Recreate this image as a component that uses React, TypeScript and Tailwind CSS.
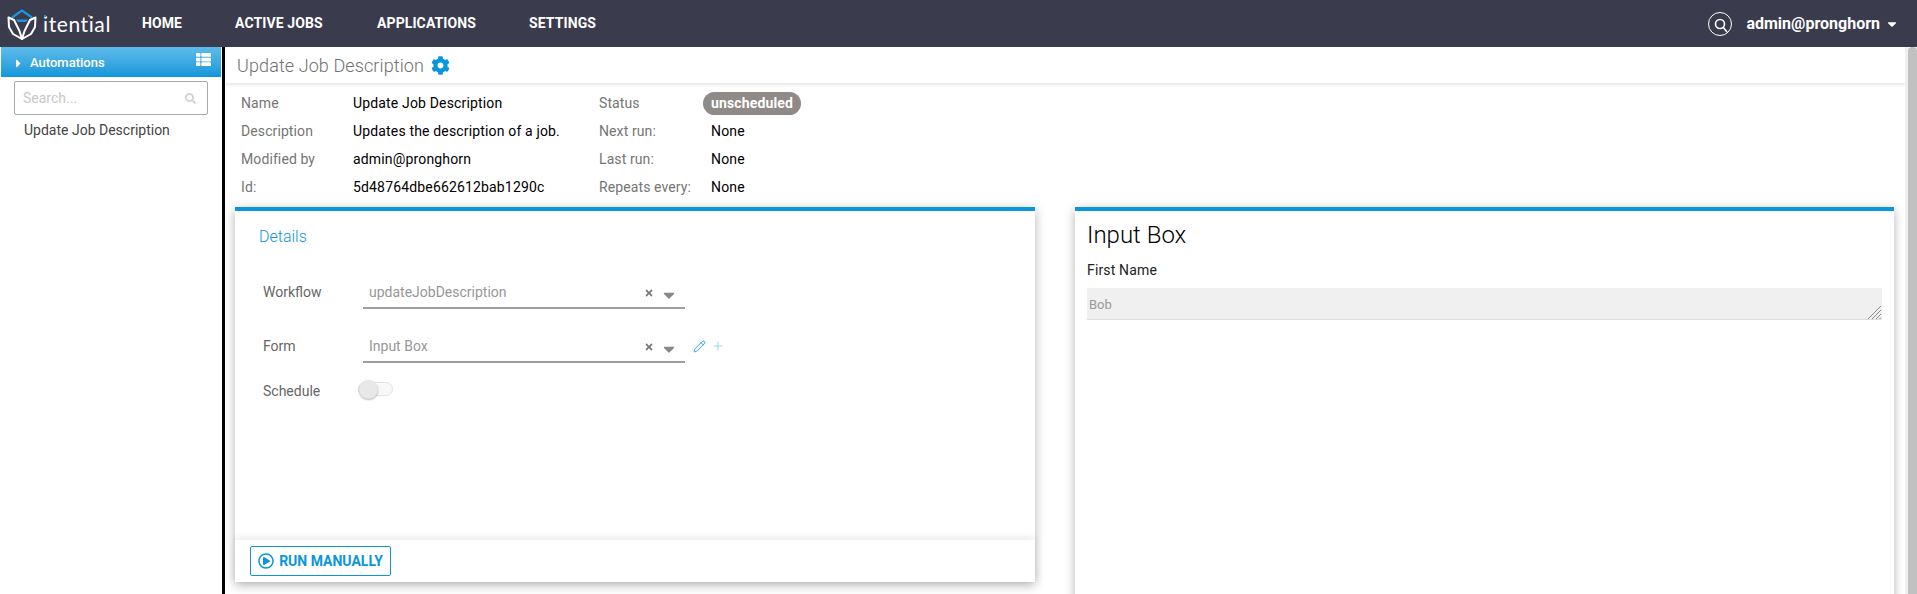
import { FaCaretDown, FaCaretRight, FaCog, FaRegPlayCircle, FaSearch, FaThList, FaTimes } from "react-icons/fa";
import { Pencil, Plus } from "lucide-react";

const navItems = [
  { label: "HOME", cls: "w-[93px]" },
  { label: "ACTIVE JOBS", cls: "w-[142px]" },
  { label: "APPLICATIONS", cls: "w-[152px]" },
  { label: "SETTINGS", cls: "" },
];

const leftInfo = [
  ["Name", "Update Job Description"],
  ["Description", "Updates the description of a job."],
  ["Modified by", "admin@pronghorn"],
  ["Id:", "5d48764dbe662612bab1290c"],
];

const rightInfo = [
  ["Next run:", "None"],
  ["Last run:", "None"],
  ["Repeats every:", "None"],
];

function Logo() {
  return (
    <div className="flex items-center">
      <svg width="30" height="32" viewBox="0 0 30 32" fill="none" className="mt-[3px]">
        <path d="M5 8.5 L15 1.5 L25 8.5" stroke="#1b98dc" strokeWidth="2.2" />
        <path d="M9 10.5 H21 L19 13 H11 Z" fill="#1b98dc" />
        <path d="M1.5 8.5 L7 11 L12.5 22 L15 30 L6 25 L2 18 Z" stroke="#fff" strokeWidth="2" strokeLinejoin="round" />
        <path d="M28.5 8.5 L23 11 L17.5 22 L15 30 L24 25 L28 18 Z" stroke="#fff" strokeWidth="2" strokeLinejoin="round" />
      </svg>
      <span className="relative ml-[6px] font-['Lato',sans-serif] text-[21px] font-normal leading-none tracking-[0.6px] text-white">
        itential
        <span className="absolute left-[1px] top-[2px] h-[2px] w-[2px] bg-[#1b98dc]" />
        <span className="absolute left-[45px] top-[2px] h-[2px] w-[2px] bg-[#e8702a]" />
      </span>
    </div>
  );
}

function NavBar() {
  return (
    <header className="flex h-[47px] items-center bg-[#3a3c4e] pl-[7px] pr-[18px] text-white">
      <div className="w-[135px]">
        <Logo />
      </div>
      <nav className="flex text-[14px] font-bold tracking-[0.1px]">
        {navItems.map((n) => (
          <span key={n.label} className={n.cls}>{n.label}</span>
        ))}
      </nav>
      <div className="ml-auto flex items-center text-[16px] font-bold">
        <svg width="26" height="26" viewBox="0 0 26 26" fill="none" stroke="#fff" className="mr-[13px]">
          <circle cx="13" cy="13" r="11.5" strokeWidth="1" />
          <circle cx="13" cy="13" r="4.5" strokeWidth="1.6" />
          <path d="M16.2 16.2 L20 21" strokeWidth="1.6" />
        </svg>
        <span>admin@pronghorn</span>
        <FaCaretDown className="ml-[5px] text-[14px]" />
      </div>
    </header>
  );
}

function Sidebar() {
  return (
    <aside className="w-[225px] shrink-0 border-r-[3px] border-black bg-white pl-[1px] pr-px">
      <div className="flex h-[30px] items-center bg-gradient-to-b from-[#5cbce9] to-[#0a96da] pl-[11px] pr-[10px] pt-[2px] text-[13px] font-medium text-white">
        <FaCaretRight className="mr-[5px] text-[13px]" />
        <span>Automations</span>
        <FaThList className="ml-auto mb-[7px] text-[15px]" />
      </div>
      <div className="mx-[13px] mt-[4px] flex h-[34px] items-center rounded-[2px] border border-[#a8a8a8] pl-[8px] pr-[11px] text-[14px] text-[#c8c8c8]">
        <span>Search...</span>
        <FaSearch className="ml-auto text-[11px] text-[#d0d0d0]" />
      </div>
      <div className="mt-[6px] pl-[23px] text-[14px] leading-[18px] text-[#444]">Update Job Description</div>
    </aside>
  );
}

function InfoRow({ label, value }: { label: string; value: string }) {
  return (
    <div className="flex h-[28px] items-center text-[14px]">
      <span className="w-[112px] shrink-0 tracking-[0.1px] text-[#757575]">{label}</span>
      <span className="tracking-[0.16px] text-black">{value}</span>
    </div>
  );
}

function SelectRow({ label, value, extra }: { label: string; value: string; extra?: boolean }) {
  return (
    <div className={extra ? "flex h-[47px] items-start" : "flex h-[54px] items-start"}>
      <span className="mt-[7px] w-[100px] shrink-0 text-[14px] leading-[18px] text-[#666]">{label}</span>
      <div className="flex h-[33px] w-[322px] items-center border-b-2 border-[#9e9e9e] pl-[6px] pr-[7px] pt-[2px] text-[14px] text-[#979797]">
        <span>{value}</span>
        <FaTimes className="ml-auto text-[10px] text-[#777]" />
        <FaCaretDown className="ml-[6px] mt-[5px] text-[18px] text-[#888]" />
      </div>
      {extra && (
        <div className="ml-[8px] mt-[9px] flex items-center gap-[5px]">
          <Pencil className="h-[13px] w-[13px] text-[#0a96da]" strokeWidth={1.5} />
          <Plus className="h-[14px] w-[14px] text-[#8fd0f0]" strokeWidth={1.5} />
        </div>
      )}
    </div>
  );
}

function DetailsCard() {
  return (
    <section className="flex h-[375px] w-[800px] shrink-0 flex-col border-t-4 border-[#0a96da] bg-white shadow-[0_3px_10px_rgba(0,0,0,0.3)]">
      <div className="flex-1 pl-[24px]">
        <h2 className="mt-[16px] text-[16px] font-light leading-[20px] text-[#0a96da]">Details</h2>
        <div className="ml-[4px] mt-[29px]">
          <SelectRow label="Workflow" value="updateJobDescription" />
          <SelectRow label="Form" value="Input Box" extra />
          <div className="flex h-[28px] items-center">
            <span className="w-[95px] text-[14px] text-[#666]">Schedule</span>
            <div className="relative mb-[4px] h-[14px] w-[35px] rounded-full border border-[#e2e2e2] bg-[#f8f8f8]">
              <div className="absolute left-0 top-[-3px] h-[19px] w-[19px] rounded-full bg-[#e8e8e8] shadow-[0_1px_2px_rgba(0,0,0,0.3)]" />
            </div>
          </div>
        </div>
      </div>
      <div className="flex h-[42px] items-center bg-white pl-[15px] shadow-[0_-3px_8px_rgba(0,0,0,0.08)]">
        <button className="flex h-[30px] w-[141px] items-center justify-center gap-[5px] rounded-[2px] border border-[#0a96da] text-[14px] font-bold text-[#0a96da]">
          <FaRegPlayCircle className="text-[16px]" />
          RUN MANUALLY
        </button>
      </div>
    </section>
  );
}

function FormCard() {
  return (
    <section className="min-h-[400px] flex-1 border-t-4 border-[#0a96da] bg-white px-[12px] shadow-[0_3px_10px_rgba(0,0,0,0.3)]">
      <h2 className="mt-[8px] text-[24px] font-light leading-[32px] text-black">Input Box</h2>
      <div className="mt-[9px] text-[14px] leading-[20px] tracking-[0.15px] text-[#222]">First Name</div>
      <div className="relative mt-[8px]">
        <textarea
          readOnly
          value="Bob"
          className="block h-[32px] min-h-[32px] w-full resize-none border-b border-[#ddd] bg-[#f0f0f0] px-[2px] pt-[9px] text-[13px] leading-[16px] text-[#999] outline-none"
        />
        <svg width="13" height="13" viewBox="0 0 13 13" stroke="#888" strokeWidth="1" className="absolute bottom-[1px] right-[1px]">
          <path d="M0 13 L13 0 M4 13 L13 4 M8 13 L13 8 M11.5 13 L13 11.5" />
        </svg>
      </div>
    </section>
  );
}

export default function App() {
  return (
    <div className="h-[594px] w-[1917px] overflow-hidden bg-white font-['Roboto',sans-serif]">
      <NavBar />
      <div className="flex h-[547px]">
        <Sidebar />
        <main className="flex min-w-0 flex-1 flex-col">
          <div className="flex h-[36px] shrink-0 items-center bg-white pl-[12px] text-[18px] font-light tracking-[0.1px] text-[#707070] shadow-[0_2px_3px_rgba(0,0,0,0.1)]">
            Update Job Description
            <FaCog className="ml-[7px] text-[19px] text-[#0a96da]" />
          </div>
          <div className="mt-[6px] flex pl-[16px]">
            <div className="w-[358px]">
              {leftInfo.map(([l, v]) => (
                <InfoRow key={l} label={l} value={v} />
              ))}
            </div>
            <div>
              <div className="flex h-[28px] items-center text-[14px]">
                <span className="w-[104px] tracking-[0.1px] text-[#757575]">Status</span>
                <span className="rounded-full bg-[#8f8987] px-[8px] text-[14px] font-bold leading-[23px] tracking-[0.15px] text-white">unscheduled</span>
              </div>
              {rightInfo.map(([l, v]) => (
                <InfoRow key={l} label={l} value={v} />
              ))}
            </div>
          </div>
          <div className="mt-[6px] flex gap-[40px] pl-[10px] pr-[11px]">
            <DetailsCard />
            <FormCard />
          </div>
        </main>
        <div className="w-[12px] shrink-0 border-l-[3px] border-[#efefef] bg-white">
          <div className="h-full rounded-t-[4px] bg-[#c1c1c1]" />
        </div>
      </div>
    </div>
  );
}
